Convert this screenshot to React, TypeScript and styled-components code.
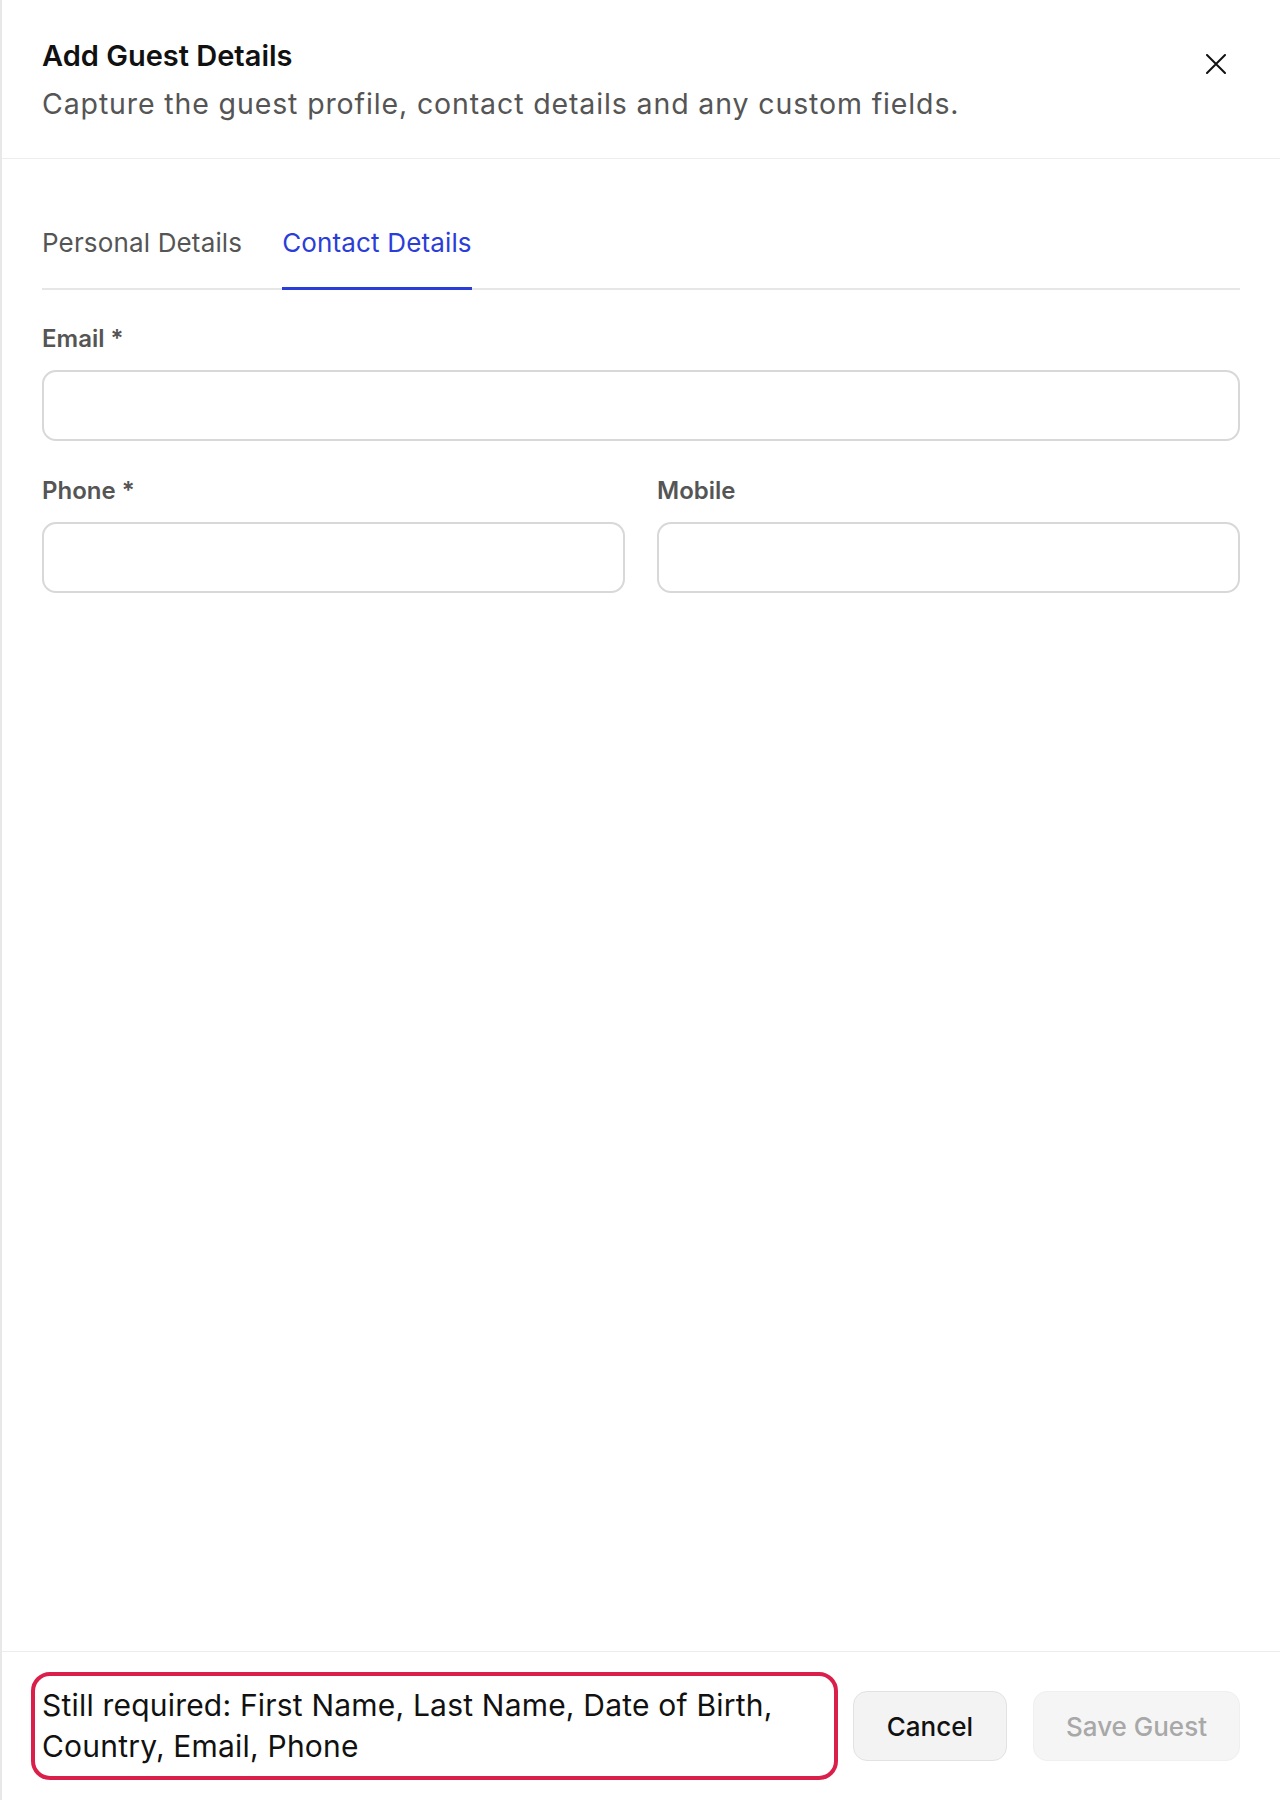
import styled, { createGlobalStyle } from 'styled-components';

const GlobalStyle = createGlobalStyle`
	* {
		box-sizing: border-box;
	}

	body {
		margin: 0;
		background: #fff;
		font-family: Inter, 'Noto Sans', Arial, sans-serif;
		color: #111;
	}
`;

const Drawer = styled.div`
	display: flex;
	flex-direction: column;
	height: 1800px;
	background: #fff;
	border-left: 2px solid #e8e8e8;
`;

const Header = styled.header`
	display: flex;
	justify-content: space-between;
	align-items: flex-start;
	padding: 39px 40px 35px 40px;
	border-bottom: 1px solid #ededed;
`;

const Title = styled.h2`
	margin: 0;
	font-size: 29px;
	line-height: 34px;
	font-weight: 600;
	color: #111;
`;

const Subtitle = styled.p`
	margin: 12px 0 0 0;
	font-size: 28.5px;
	line-height: 38px;
	letter-spacing: 0.87px;
	color: #555;
`;

const CloseButton = styled.button`
	display: flex;
	align-items: center;
	justify-content: center;
	width: 48px;
	height: 48px;
	margin-top: 1px;
	padding: 0;
	border: none;
	background: transparent;
	color: #111;
	cursor: pointer;
`;

const Body = styled.main`
	flex: 1;
	padding: 0 40px;
`;

const TabList = styled.div`
	display: flex;
	gap: 40px;
	padding-top: 68px;
	border-bottom: 2px solid #e6e6e6;
`;

const Tab = styled.button<{ $active?: boolean }>`
	padding: 0 0 28px 0;
	margin-bottom: -2px;
	border: none;
	border-bottom: 3px solid ${(p) => (p.$active ? '#2b3dd8' : 'transparent')};
	background: transparent;
	font-family: inherit;
	font-size: 26px;
	line-height: 32px;
	letter-spacing: 0.15px;
	color: ${(p) => (p.$active ? '#2b3dd8' : '#555')};
	cursor: pointer;
`;

const Fields = styled.div`
	display: flex;
	flex-direction: column;
	gap: 36px;
	padding-top: 35px;
`;

const Row = styled.div`
	display: grid;
	grid-template-columns: 1fr 1fr;
	gap: 32px;
`;

const Field = styled.label`
	display: flex;
	flex-direction: column;
	gap: 17px;
`;

const Label = styled.span`
	font-size: 24px;
	line-height: 28px;
	font-weight: 600;
	color: #555;
`;

const Input = styled.input`
	height: 71px;
	width: 100%;
	padding: 0 18px;
	border: 2px solid #d8d8d8;
	border-radius: 14px;
	font-family: inherit;
	font-size: 24px;
	outline: none;
`;

const Footer = styled.footer`
	display: flex;
	align-items: center;
	gap: 26px;
	height: 149px;
	padding: 0 40px;
	border-top: 1px solid #ededed;
`;

const Required = styled.div`
	flex: 1;
	padding: 2px 0;
	font-size: 30px;
	line-height: 41px;
	letter-spacing: 0.2px;
	color: #111;
	border-radius: 8px;
	outline: 4px solid #d91f4a;
	outline-offset: 7px;
`;

const Button = styled.button<{ $disabled?: boolean }>`
	height: 70px;
	padding: 0 ${(p) => (p.$disabled ? '32px' : '33px')};
	border-radius: 14px;
	border: 1px solid ${(p) => (p.$disabled ? '#efefef' : '#e2e2e2')};
	background: ${(p) => (p.$disabled ? '#f5f5f5' : '#f3f3f3')};
	font-family: inherit;
	font-size: 26px;
	font-weight: 500;
	color: ${(p) => (p.$disabled ? '#a8a8a8' : '#111')};
	cursor: ${(p) => (p.$disabled ? 'not-allowed' : 'pointer')};
`;

export default function App() {
	return (
		<>
			<GlobalStyle />
			<Drawer>
				<Header>
					<div>
						<Title>Add Guest Details</Title>
						<Subtitle>Capture the guest profile, contact details and any custom fields.</Subtitle>
					</div>
					<CloseButton aria-label='Close'>
						<svg width='20' height='20' viewBox='0 0 20 20' fill='none' stroke='currentColor' strokeWidth='2' strokeLinecap='round'>
							<path d='M1 1L19 19M19 1L1 19' />
						</svg>
					</CloseButton>
				</Header>
				<Body>
					<TabList>
						<Tab>Personal Details</Tab>
						<Tab $active>Contact Details</Tab>
					</TabList>
					<Fields>
						<Field>
							<Label>Email *</Label>
							<Input type='email' />
						</Field>
						<Row>
							<Field>
								<Label>Phone *</Label>
								<Input type='tel' />
							</Field>
							<Field>
								<Label>Mobile</Label>
								<Input type='tel' />
							</Field>
						</Row>
					</Fields>
				</Body>
				<Footer>
					<Required>Still required: First Name, Last Name, Date of Birth, Country, Email, Phone</Required>
					<Button>Cancel</Button>
					<Button $disabled disabled>
						Save Guest
					</Button>
				</Footer>
			</Drawer>
		</>
	);
}
